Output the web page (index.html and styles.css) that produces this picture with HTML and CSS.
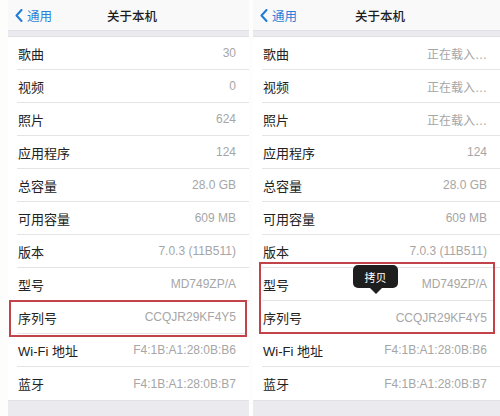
FILE: index.html
```
<!DOCTYPE html>
<html lang="zh-CN">
<head>
    <meta charset="UTF-8">
    <meta name="viewport" content="width=device-width, initial-scale=1.0">
    <title>关于本机</title>
    <link rel="stylesheet" href="styles.css">
</head>
<body>
    <div class="screens">
        <!-- 左：序列号 -->
        <section class="phone phone-left">
            <header class="nav">
                <span class="back">
                    <svg class="chevron" width="8" height="13" viewBox="0 0 8 13"><path d="M6.5 1 L1.5 6.5 L6.5 12" fill="none" stroke="#1f7ad8" stroke-width="2" stroke-linecap="round" stroke-linejoin="round"/></svg>
                    通用
                </span>
                <h1 class="title">关于本机</h1>
            </header>
            <div class="band"></div>
            <ul class="list">
                <li class="row"><span class="label">歌曲</span><span class="value">30</span></li>
                <li class="row"><span class="label">视频</span><span class="value">0</span></li>
                <li class="row"><span class="label">照片</span><span class="value">624</span></li>
                <li class="row"><span class="label">应用程序</span><span class="value">124</span></li>
                <li class="row"><span class="label">总容量</span><span class="value">28.0 GB</span></li>
                <li class="row"><span class="label">可用容量</span><span class="value">609 MB</span></li>
                <li class="row"><span class="label">版本</span><span class="value">7.0.3 (11B511)</span></li>
                <li class="row"><span class="label">型号</span><span class="value">MD749ZP/A</span></li>
                <li class="highlight">
                    <div class="row"><span class="label">序列号</span><span class="value">CCQJR29KF4Y5</span></div>
                </li>
                <li class="row"><span class="label">Wi-Fi 地址</span><span class="value">F4:1B:A1:28:0B:B6</span></li>
                <li class="row row-last"><span class="label">蓝牙</span><span class="value">F4:1B:A1:28:0B:B7</span></li>
            </ul>
            <div class="band band-bottom"></div>
        </section>

        <!-- 右：长按拷贝 -->
        <section class="phone phone-right">
            <header class="nav">
                <span class="back">
                    <svg class="chevron" width="8" height="13" viewBox="0 0 8 13"><path d="M6.5 1 L1.5 6.5 L6.5 12" fill="none" stroke="#1f7ad8" stroke-width="2" stroke-linecap="round" stroke-linejoin="round"/></svg>
                    通用
                </span>
                <h1 class="title">关于本机</h1>
            </header>
            <div class="band"></div>
            <ul class="list">
                <li class="row"><span class="label">歌曲</span><span class="value">正在载入…</span></li>
                <li class="row"><span class="label">视频</span><span class="value">正在载入…</span></li>
                <li class="row"><span class="label">照片</span><span class="value">正在载入…</span></li>
                <li class="row"><span class="label">应用程序</span><span class="value">124</span></li>
                <li class="row"><span class="label">总容量</span><span class="value">28.0 GB</span></li>
                <li class="row"><span class="label">可用容量</span><span class="value">609 MB</span></li>
                <li class="row"><span class="label">版本</span><span class="value">7.0.3 (11B511)</span></li>
                <li class="highlight highlight-tall">
                    <div class="row"><span class="label">型号</span><span class="value">MD749ZP/A</span></div>
                    <div class="row"><span class="label">序列号</span><span class="value">CCQJR29KF4Y5</span></div>
                    <div class="tooltip">拷贝</div>
                </li>
                <li class="row"><span class="label">Wi-Fi 地址</span><span class="value">F4:1B:A1:28:0B:B6</span></li>
                <li class="row row-last"><span class="label">蓝牙</span><span class="value">F4:1B:A1:28:0B:B7</span></li>
            </ul>
            <div class="band band-bottom"></div>
        </section>
    </div>
</body>
</html>
```

FILE: styles.css
```
* {
    margin: 0;
    padding: 0;
    box-sizing: border-box;
}

body {
    font-family: "Liberation Sans", "Noto Sans CJK SC", sans-serif;
    background: #fdfdfb;
    width: 500px;
    height: 416px;
    overflow: hidden;
}

.screens {
    display: flex;
    gap: 4px;
    padding-left: 8px;
    height: 416px;
}

.phone {
    display: flex;
    flex-direction: column;
    background: #fff;
}

.phone-left {
    width: 241px;
}

.phone-right {
    width: 247px;
}

.nav {
    height: 30px;
    display: grid;
    grid-template-columns: 1fr auto 1fr;
    align-items: center;
    background: #f9f9f9;
    padding-left: 7px;
}

.back {
    display: flex;
    align-items: center;
    gap: 4px;
    color: #2a7fd8;
    font-size: 12.5px;
}

.title {
    font-size: 12.5px;
    font-weight: 500;
    color: #1c1c1c;
}

.band {
    height: 7px;
    background: #ebebef;
    border-top: 1px solid #e2e2e6;
    border-bottom: 1px solid #dfdfe3;
}

.band-bottom {
    flex: 1;
    border-bottom: none;
}

.list {
    list-style: none;
    background: #fff;
}

.row {
    height: 33px;
    margin-left: 9px;
    padding: 0 13px 0 1px;
    display: flex;
    align-items: center;
    justify-content: space-between;
    border-bottom: 1px solid #e4e4e4;
}

.row-last {
    border-bottom: none;
}

.label {
    font-size: 13px;
    color: #222;
}

.value {
    font-size: 12px;
    color: #a6a6a6;
}

/* red frame drawn over the highlighted rows */
.highlight {
    position: relative;
    margin: 0 2px 0 1px;
}

.highlight::before {
    content: "";
    position: absolute;
    top: -1px;
    left: 0;
    right: 0;
    bottom: -3px;
    border: 2px solid #c3434b;
    z-index: 1;
}

.highlight .row {
    margin-left: 8px;
    padding-right: 11px;
}

.highlight-tall {
    margin: 0 5px 0 6px;
}

.highlight-tall::before {
    top: -6px;
    bottom: 0;
}

.highlight-tall .row {
    margin-left: 3px;
    padding-right: 8px;
}

.highlight-tall .row + .row {
    border-bottom: none;
}

.tooltip {
    position: absolute;
    left: 94px;
    top: -3px;
    width: 45px;
    height: 23px;
    border-radius: 5px;
    background: #1e1e1e;
    color: #fff;
    font-size: 11px;
    display: flex;
    align-items: center;
    justify-content: center;
    z-index: 2;
}

.tooltip::after {
    content: "";
    position: absolute;
    left: 50%;
    bottom: -6px;
    margin-left: -6px;
    border-left: 6px solid transparent;
    border-right: 6px solid transparent;
    border-top: 6px solid #1e1e1e;
}
```
